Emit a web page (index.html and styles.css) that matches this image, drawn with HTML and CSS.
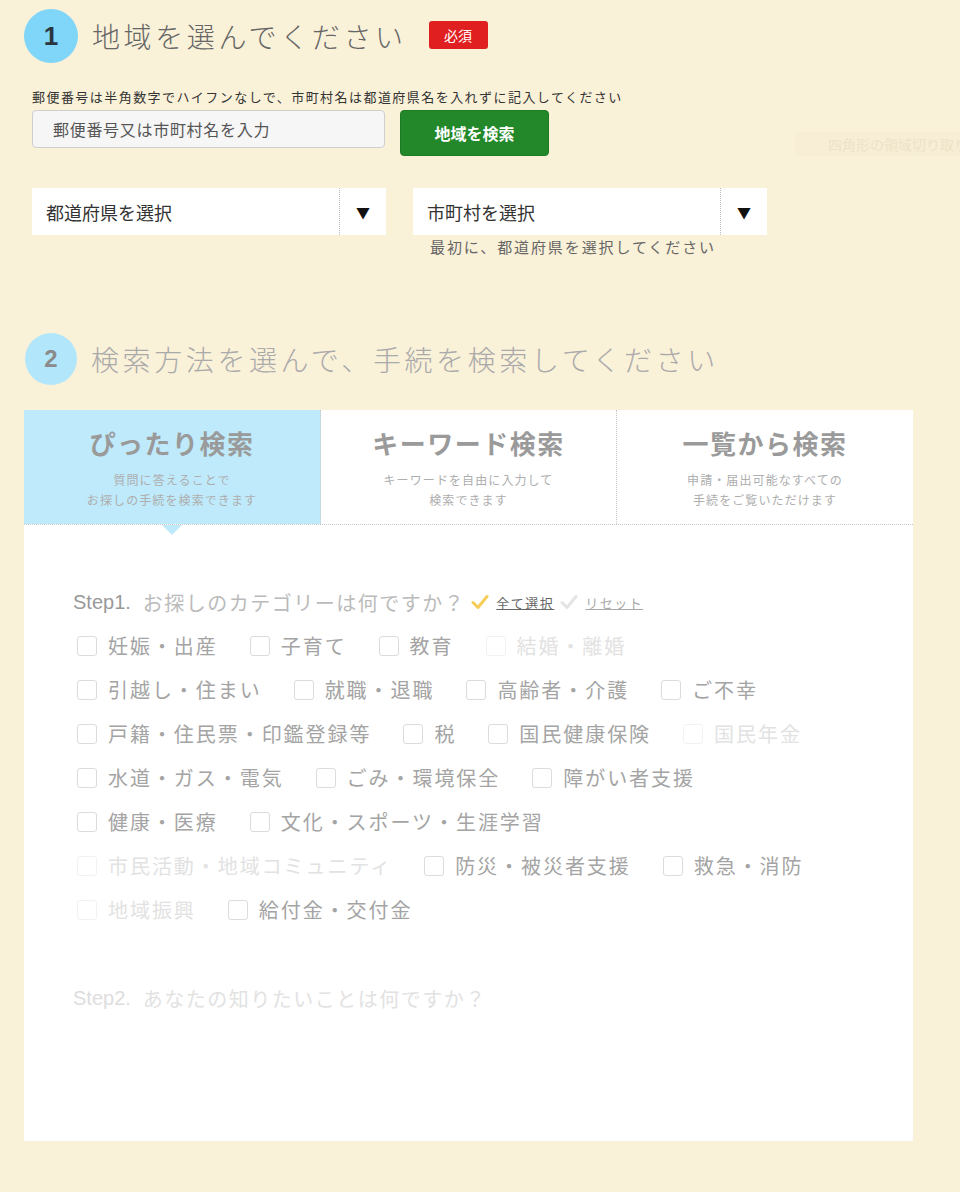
FILE: index.html
```html
<!DOCTYPE html>
<html lang="ja">
<head>
<meta charset="utf-8">
<title>手続検索</title>
<link rel="stylesheet" href="styles.css">
</head>
<body>
<div class="snip"><span>四角形の領域切り取り</span></div>
<div class="page">
  <section class="area">
    <div class="head">
      <div class="num num1">1</div>
      <h2 class="title title1">地域を選んでください</h2>
      <span class="badge">必須</span>
    </div>
    <p class="hint">郵便番号は半角数字でハイフンなしで、市町村名は都道府県名を入れずに記入してください</p>
    <div class="search-row">
      <input class="zip" type="text" placeholder="郵便番号又は市町村名を入力">
      <button class="btn" type="button">地域を検索</button>
    </div>
    <div class="select-row">
      <div class="select-col">
        <div class="select"><span class="sel-text">都道府県を選択</span><span class="sel-arrow">▼</span></div>
      </div>
      <div class="select-col">
        <div class="select"><span class="sel-text">市町村を選択</span><span class="sel-arrow">▼</span></div>
        <p class="sel-note">最初に、都道府県を選択してください</p>
      </div>
    </div>
  </section>

  <section class="method">
    <div class="head head2">
      <div class="num num2">2</div>
      <h2 class="title title2">検索方法を選んで、手続を検索してください</h2>
    </div>

    <div class="panel">
      <div class="tabs">
        <div class="tab active">
          <div class="tab-title">ぴったり検索</div>
          <div class="tab-desc">質問に答えることで<br>お探しの手続を検索できます</div>
        </div>
        <div class="tab">
          <div class="tab-title">キーワード検索</div>
          <div class="tab-desc">キーワードを自由に入力して<br>検索できます</div>
        </div>
        <div class="tab">
          <div class="tab-title">一覧から検索</div>
          <div class="tab-desc">申請・届出可能なすべての<br>手続をご覧いただけます</div>
        </div>
      </div>

      <div class="panel-body">
        <div class="step step1">
          <span class="step-no">Step1.</span>
          <span class="step-q">お探しのカテゴリーは何ですか？</span>
          <span class="tools">
            <svg class="chk chk-on" viewBox="0 0 18 16" width="18" height="16"><path d="M2 8.5 L7 13.5 L16 2.5" fill="none" stroke="#f5cd57" stroke-width="3" stroke-linecap="round" stroke-linejoin="round"/></svg>
            <a class="tool-link">全て選択</a>
            <svg class="chk chk-off" viewBox="0 0 18 16" width="18" height="16"><path d="M2 8.5 L7 13.5 L16 2.5" fill="none" stroke="#e4e4e4" stroke-width="3" stroke-linecap="round" stroke-linejoin="round"/></svg>
            <a class="tool-link light">リセット</a>
          </span>
        </div>

        <div class="cats">
          <div class="cat-row">
            <label class="cat"><span class="box"></span><span class="lbl">妊娠・出産</span></label>
            <label class="cat"><span class="box"></span><span class="lbl">子育て</span></label>
            <label class="cat"><span class="box"></span><span class="lbl">教育</span></label>
            <label class="cat off"><span class="box"></span><span class="lbl">結婚・離婚</span></label>
          </div>
          <div class="cat-row">
            <label class="cat"><span class="box"></span><span class="lbl">引越し・住まい</span></label>
            <label class="cat"><span class="box"></span><span class="lbl">就職・退職</span></label>
            <label class="cat"><span class="box"></span><span class="lbl">高齢者・介護</span></label>
            <label class="cat"><span class="box"></span><span class="lbl">ご不幸</span></label>
          </div>
          <div class="cat-row">
            <label class="cat"><span class="box"></span><span class="lbl">戸籍・住民票・印鑑登録等</span></label>
            <label class="cat"><span class="box"></span><span class="lbl">税</span></label>
            <label class="cat"><span class="box"></span><span class="lbl">国民健康保険</span></label>
            <label class="cat off"><span class="box"></span><span class="lbl">国民年金</span></label>
          </div>
          <div class="cat-row">
            <label class="cat"><span class="box"></span><span class="lbl">水道・ガス・電気</span></label>
            <label class="cat"><span class="box"></span><span class="lbl">ごみ・環境保全</span></label>
            <label class="cat"><span class="box"></span><span class="lbl">障がい者支援</span></label>
          </div>
          <div class="cat-row">
            <label class="cat"><span class="box"></span><span class="lbl">健康・医療</span></label>
            <label class="cat"><span class="box"></span><span class="lbl">文化・スポーツ・生涯学習</span></label>
          </div>
          <div class="cat-row">
            <label class="cat off"><span class="box"></span><span class="lbl">市民活動・地域コミュニティ</span></label>
            <label class="cat"><span class="box"></span><span class="lbl">防災・被災者支援</span></label>
            <label class="cat"><span class="box"></span><span class="lbl">救急・消防</span></label>
          </div>
          <div class="cat-row">
            <label class="cat off"><span class="box"></span><span class="lbl">地域振興</span></label>
            <label class="cat"><span class="box"></span><span class="lbl">給付金・交付金</span></label>
          </div>
        </div>

        <div class="step step2">
          <span class="step-no">Step2.</span>
          <span class="step-q">あなたの知りたいことは何ですか？</span>
        </div>
      </div>
    </div>
  </section>
</div>
</body>
</html>
```

FILE: styles.css
```css
html, body {
  margin: 0;
  padding: 0;
}
body {
  background: #faf1d9;
  font-family: "Noto Sans CJK JP", "Noto Sans", sans-serif;
  color: #333;
  position: relative;
  min-height: 1192px;
}
p, h2 {
  margin: 0;
}

.snip {
  position: absolute;
  left: 795px;
  top: 132px;
  width: 165px;
  height: 24px;
  background: #f7eed5;
  display: flex;
  align-items: center;
  overflow: hidden;
}
.snip span {
  margin-left: 33px;
  font-size: 14px;
  color: #ece3c8;
  white-space: nowrap;
}

.page {
  padding: 9px 0 0 24px;
}

.head {
  display: flex;
  align-items: center;
}
.num {
  border-radius: 50%;
  display: flex;
  align-items: center;
  justify-content: center;
  font-family: "Liberation Sans", Arial, sans-serif;
  font-weight: bold;
  flex: none;
}
.num1 {
  width: 54px;
  height: 54px;
  background: #7fd6f8;
  color: #2a3540;
  font-size: 26px;
}
.num2 {
  width: 52px;
  height: 52px;
  margin-left: 1px;
  background: #b2e7fb;
  color: #8a8a8a;
  font-size: 24px;
}
.title {
  margin-left: 14px;
  font-size: 28px;
  font-weight: 300;
  letter-spacing: 3.6px;
  line-height: 40px;
}
.title1 {
  color: #666;
}
.title2 {
  color: #aaa;
  margin-left: 14px;
}
.badge {
  margin-left: 22px;
  background: #e02020;
  color: #fff;
  font-size: 14px;
  width: 59px;
  height: 28px;
  border-radius: 3px;
  display: flex;
  align-items: center;
  justify-content: center;
  margin-top: -2px;
}

.hint {
  margin: 25px 0 0 8px;
  font-size: 13px;
  line-height: 18px;
  letter-spacing: 1.45px;
  color: #333;
}

.search-row {
  display: flex;
  align-items: flex-start;
  gap: 15px;
  margin: 4px 0 0 8px;
}
.zip {
  box-sizing: border-box;
  width: 353px;
  height: 38px;
  background: #f5f6f5;
  border: 1px solid #cfcfcf;
  border-radius: 4px;
  padding: 0 0 0 20px;
  font-family: inherit;
  font-size: 16px;
  letter-spacing: 0.7px;
  outline: none;
}
.zip::placeholder {
  color: #555;
}
.btn {
  width: 149px;
  height: 46px;
  background: #22882a;
  border: 1px solid #1e7a25;
  border-radius: 4px;
  color: #fff;
  font-family: inherit;
  font-weight: bold;
  font-size: 16px;
}

.select-row {
  display: flex;
  gap: 27px;
  margin: 32px 0 0 8px;
}
.select-col {
  width: 354px;
}
.select {
  height: 47px;
  background: #fff;
  display: flex;
  align-items: stretch;
}
.sel-text {
  flex: 1;
  display: flex;
  align-items: center;
  padding-left: 14px;
  font-size: 18px;
  color: #333;
  border-right: 1px dotted #bbb;
}
.sel-arrow {
  width: 46px;
  display: flex;
  align-items: center;
  justify-content: center;
  font-size: 14px;
  color: #111;
}
.sel-note {
  margin: 2px 0 0 17px;
  font-size: 15px;
  line-height: 20px;
  letter-spacing: 1.9px;
  color: #666;
}

.method {
  margin-top: 76px;
}

.panel {
  margin-top: 25px;
  width: 889px;
  background: #fff;
}
.tabs {
  display: grid;
  grid-template-columns: 297px 296px 296px;
  border-bottom: 1px dotted #c8c8c8;
}
.tab {
  height: 114px;
  box-sizing: border-box;
  padding-top: 16px;
  text-align: center;
  position: relative;
  border-right: 1px dotted #c8c8c8;
}
.tab:last-child {
  border-right: none;
}
.tab.active {
  background: #bfeafb;
}
.tab.active::after {
  content: "";
  position: absolute;
  left: 138px;
  bottom: -11px;
  width: 0;
  height: 0;
  border-left: 10px solid transparent;
  border-right: 10px solid transparent;
  border-top: 10px solid #bfeafb;
}
.tab-title {
  font-size: 26px;
  font-weight: bold;
  line-height: 34px;
  letter-spacing: 1.5px;
  color: #9a9a9a;
}
.tab-desc {
  margin-top: 10px;
  font-size: 12px;
  line-height: 20px;
  letter-spacing: 1.1px;
  color: #aeaeae;
}

.panel-body {
  padding: 63px 0 129px 49px;
}
.step {
  display: flex;
  align-items: center;
  height: 28px;
  font-size: 20px;
}
.step-no {
  font-family: "Liberation Sans", Arial, sans-serif;
  margin-right: 12px;
}
.step-q {
  letter-spacing: 1.5px;
}
.step1 .step-no {
  color: #999;
}
.step1 .step-q {
  color: #bbb;
}
.step2 .step-no {
  color: #ddd;
}
.step2 .step-q {
  color: #e2e2e2;
}
.tools {
  display: flex;
  align-items: center;
  margin-left: 6px;
  font-size: 13px;
}
.chk {
  display: block;
  margin-right: 7px;
}
.chk-off {
  margin-left: 6px;
}
.tool-link {
  text-decoration: underline;
  letter-spacing: 1.5px;
  color: #666;
}
.tool-link.light {
  color: #aaa;
}

.cats {
  margin: 8px 0 0 4px;
}
.cat-row {
  display: flex;
  height: 44px;
  align-items: center;
}
.cat {
  display: flex;
  align-items: center;
  margin-right: 32px;
}
.box {
  box-sizing: border-box;
  width: 20px;
  height: 20px;
  border: 1px solid #dcdcdc;
  border-radius: 3px;
  margin-right: 11px;
  background: #fff;
}
.lbl {
  font-size: 20px;
  letter-spacing: 1.95px;
  color: #a4a4a4;
  line-height: 28px;
}
.cat.off .box {
  border-color: #f2f2f2;
}
.cat.off .lbl {
  color: #e2e2e2;
}

.step2 {
  margin-top: 52px;
}
```
